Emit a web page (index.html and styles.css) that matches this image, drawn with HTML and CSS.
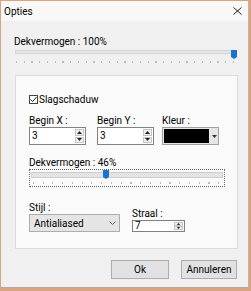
FILE: index.html
```html
<!DOCTYPE html>
<html>
<head>
  <title>Opties</title>
  <link rel="stylesheet" href="styles.css">
</head>
<body>

  <div class="window">
    <div class="titlebar">
      <span class="title">Opties</span>
      <svg class="close" width="9" height="8" viewBox="0 0 9 8">
        <path d="M0.5 0.5 L8.5 7.5 M8.5 0.5 L0.5 7.5" stroke="#222" stroke-width="1" fill="none"/>
      </svg>
    </div>

    <div class="content">
      <div class="label top-label">Dekvermogen : 100%</div>
      <div class="slider">
        <div class="track"></div>
        <svg class="thumb" style="left: 216px" width="6" height="9" viewBox="0 0 6 9">
          <polygon points="0,0 6,0 6,7 3,9 0,7" fill="#1a73cc"/>
        </svg>
        <div class="ticks"></div>
      </div>

      <div class="group">
        <div class="check">
          <span class="box">
            <svg width="7" height="7" viewBox="0 0 7 7">
              <path d="M0.5 3.5 L2.6 5.6 L6.5 1" stroke="#222" stroke-width="1" fill="none"/>
            </svg>
          </span>
          <span>Slagschaduw</span>
        </div>

        <div class="fields">
          <div class="field field-x">
            <div class="label">Begin X :</div>
            <div class="spin">
              <span class="val">3</span>
              <span class="btns">
                <span class="btn"><svg width="5" height="3" viewBox="0 0 5 3"><polygon points="0,3 5,3 2.5,0" fill="#222"/></svg></span>
                <span class="btn"><svg width="5" height="3" viewBox="0 0 5 3"><polygon points="0,0 5,0 2.5,3" fill="#222"/></svg></span>
              </span>
            </div>
          </div>
          <div class="field field-y">
            <div class="label">Begin Y :</div>
            <div class="spin">
              <span class="val">3</span>
              <span class="btns">
                <span class="btn"><svg width="5" height="3" viewBox="0 0 5 3"><polygon points="0,3 5,3 2.5,0" fill="#222"/></svg></span>
                <span class="btn"><svg width="5" height="3" viewBox="0 0 5 3"><polygon points="0,0 5,0 2.5,3" fill="#222"/></svg></span>
              </span>
            </div>
          </div>
          <div class="field field-color">
            <div class="label">Kleur :</div>
            <div class="color">
              <span class="swatch"></span>
              <svg class="caret" width="5" height="3" viewBox="0 0 5 3"><polygon points="0,0 5,0 2.5,3" fill="#333"/></svg>
            </div>
          </div>
        </div>

        <div class="label label-opacity">Dekvermogen : 46%</div>
        <div class="slider slider-focus">
          <div class="track"></div>
          <svg class="thumb" style="left: 73px" width="6" height="9" viewBox="0 0 6 9">
            <polygon points="0,0 6,0 6,7 3,9 0,7" fill="#1a73cc"/>
          </svg>
          <div class="ticks"></div>
        </div>

        <div class="bottom-row">
          <div class="field field-style">
            <div class="label">Stijl :</div>
            <div class="select">
              <span>Antialiased</span>
              <svg width="7" height="4" viewBox="0 0 7 4"><path d="M0.5 0.5 L3.5 3.5 L6.5 0.5" stroke="#666" fill="none"/></svg>
            </div>
          </div>
          <div class="field field-radius">
            <div class="label">Straal :</div>
            <div class="spin spin-short">
              <span class="val">7</span>
              <span class="btns">
                <span class="btn"><svg width="5" height="3" viewBox="0 0 5 3"><polygon points="0,3 5,3 2.5,0" fill="#222"/></svg></span>
                <span class="btn"><svg width="5" height="3" viewBox="0 0 5 3"><polygon points="0,0 5,0 2.5,3" fill="#222"/></svg></span>
              </span>
            </div>
          </div>
        </div>
      </div>

      <div class="buttons">
        <button class="btn-ok">Ok</button>
        <button class="btn-cancel">Annuleren</button>
      </div>
    </div>
  </div>

</body>
</html>
```

FILE: styles.css
```css
body {
  margin: 0;
  background: #d7a381;
  font-family: Roboto, "Noto Sans", sans-serif;
  font-size: 10px;
  color: #000;
}

.window {
  margin: 1px 0 0 1px;
  width: 248px;
  height: 287px;
  box-sizing: border-box;
  background: #f0f0f0;
  border-right: 1px solid #c4b4aa;
  border-bottom: 1px solid #b9a69a;
}

.titlebar {
  height: 20px;
  background: #faf8f7;
  display: flex;
  align-items: center;
  justify-content: space-between;
  padding: 0 6px 0 3px;
}

.close {
  display: block;
}

.content {
  padding: 14px 0 0 14px;
}

.label {
  line-height: 13px;
  white-space: nowrap;
}

.top-label {
  margin-left: -1px;
}

/* sliders */
.slider {
  position: relative;
  width: 223px;
  height: 16px;
}

.slider .track {
  margin: 2px 2px 0 0;
  height: 4px;
  box-sizing: border-box;
  border: 1px solid #d4d4d4;
  background: #e6e6e6;
}

.slider .thumb {
  position: absolute;
  top: 0;
  display: block;
}

.slider .ticks {
  margin: 7px 2px 0 1px;
  height: 2px;
  background: repeating-linear-gradient(to right, #bcbcbc 0, #bcbcbc 1px, transparent 1px, transparent 7.75px);
}

.slider-focus {
  width: 196px;
  height: 18px;
  box-sizing: border-box;
  border: 1px dotted #6a6a6a;
}

.slider-focus .track {
  margin: 2px 1px 0 1px;
  height: 6px;
  border-color: #cfcfcf;
  background: #e4e4e4;
}

.slider-focus .ticks {
  margin: 4px 2px 0 3px;
  height: 2px;
  background: repeating-linear-gradient(to right, #bcbcbc 0, #bcbcbc 1px, transparent 1px, transparent 9.75px);
}

/* group box */
.group {
  margin-top: 9px;
  width: 223px;
  height: 174px;
  box-sizing: border-box;
  border: 1px solid #dcdcdc;
  background: #fafafa;
  padding: 16px 0 0 13px;
}

.check {
  display: flex;
  align-items: center;
  height: 15px;
}

.check .box {
  width: 9px;
  height: 9px;
  box-sizing: border-box;
  border: 1px solid #444;
  background: #fff;
  display: flex;
  align-items: center;
  justify-content: center;
  margin-right: 1px;
}

.fields {
  display: flex;
  margin-top: 7px;
}

.field-x, .field-y {
  width: 57px;
  margin-right: 11px;
}

.field-y {
  margin-right: 8px;
}

.field-color {
  width: 57px;
}

.spin {
  display: flex;
  height: 18px;
  box-sizing: border-box;
  border: 1px solid #828282;
  background: #fff;
}

.spin .val {
  flex: 1;
  padding-left: 2px;
  line-height: 16px;
}

.spin .btns {
  width: 9px;
  margin: 1px;
  display: flex;
  flex-direction: column;
  gap: 1px;
}

.spin .btn {
  flex: 1;
  border: 1px solid #c6c6c6;
  background: #f0f0f0;
  display: flex;
  align-items: center;
  justify-content: center;
}

.spin-short {
  height: 12px;
}

.spin-short .val {
  line-height: 10px;
}

.spin-short .btns {
  gap: 0;
}

.spin-short .btn svg {
  height: 2px;
}

.color {
  display: flex;
  align-items: center;
  height: 18px;
  box-sizing: border-box;
  border: 1px solid #a0a0a0;
  background: #e6e6e6;
}

.color .swatch {
  width: 45px;
  height: 14px;
  background: #000;
  margin-left: 1px;
}

.color .caret {
  margin-left: 3px;
}

.label-opacity {
  margin-top: 11px;
}

.bottom-row {
  display: flex;
  align-items: flex-start;
  margin-top: 14px;
}

.field-style {
  width: 91px;
  margin-right: 12px;
}

.select {
  display: flex;
  align-items: center;
  justify-content: space-between;
  height: 18px;
  box-sizing: border-box;
  border: 1px solid #adadad;
  background: #e5e5e5;
  padding: 0 3px 0 4px;
}

.field-radius {
  width: 53px;
  margin-top: 6px;
}

/* dialog buttons */
.buttons {
  display: flex;
  justify-content: flex-end;
  gap: 12px;
  margin-top: 11px;
  padding-right: 11px;
}

.buttons button {
  height: 19px;
  padding: 0;
  border: 1px solid #adadad;
  background: #e1e1e1;
  font-family: Roboto, "Noto Sans", sans-serif;
  font-size: 10px;
  color: #000;
}

.btn-ok {
  width: 58px;
}

.btn-cancel {
  width: 56px;
}
```
